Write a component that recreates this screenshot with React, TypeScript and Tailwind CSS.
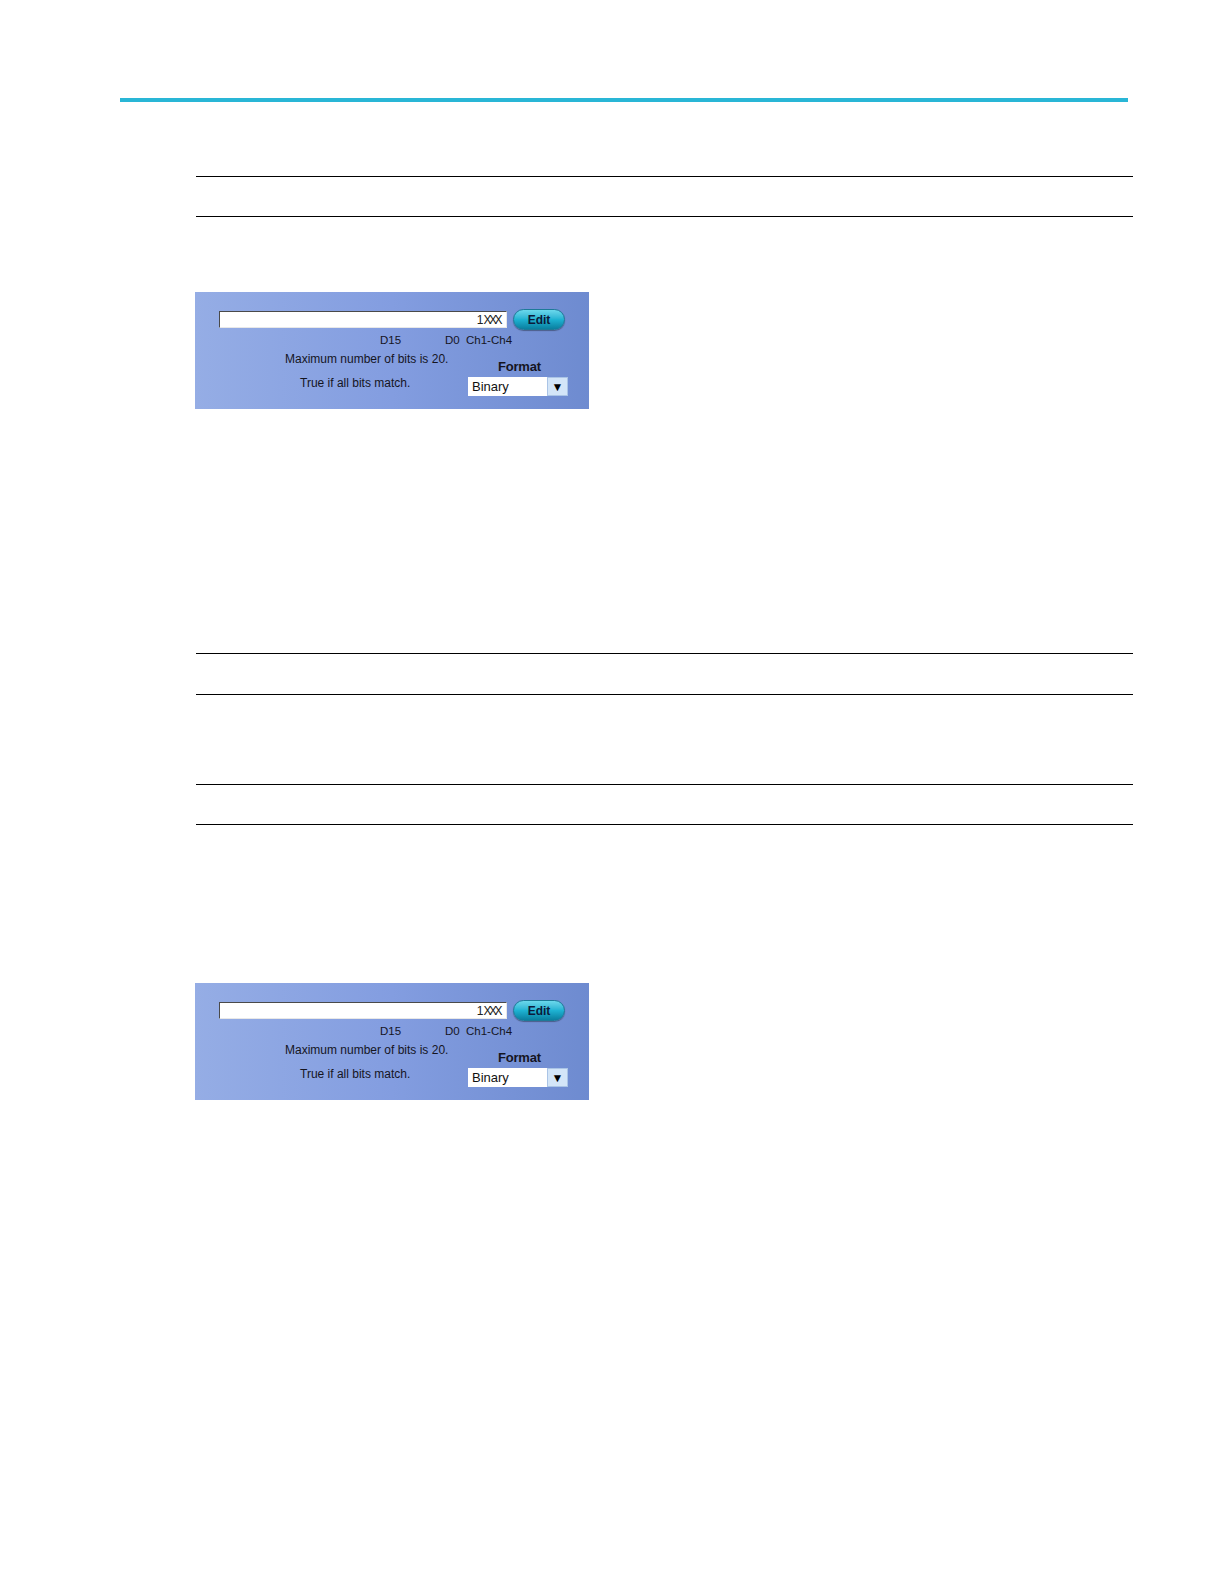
import React from "react"

const font = { fontFamily: '"Liberation Sans", Arial, sans-serif' }

function Rule() {
  return <div className="ml-[196px] h-px w-[937px] bg-black" />
}

function PatternPanel() {
  return (
    <div
      className="ml-[195px] flex h-[117px] w-[394px] flex-col bg-gradient-to-r from-[#95ade5] via-[#839de0] to-[#6e8bd0] text-[#15151f]"
      style={font}
    >
      {/* value field + edit button */}
      <div className="mt-[17px] flex h-[21px] items-center">
        <div className="ml-[24px] flex h-[17px] w-[288px] items-center justify-end border-l border-t border-l-[#4a4a4a] border-t-[#4a4a4a] border-r border-b border-r-[#e8e8e8] border-b-[#e8e8e8] bg-white pr-[4px] text-[12px] leading-none text-[#222]">
          <span>1</span>
          <span className="tracking-[-2.5px] pr-[2px]">XXX</span>
        </div>
        <button className="ml-[6px] flex h-[21px] w-[52px] items-center justify-center rounded-full border border-[#1d7a98] bg-gradient-to-b from-[#6ad8ec] via-[#1eb2d2] to-[#0a7f9f] pt-px text-[12px] font-bold leading-none text-[#0b1a3a] shadow-[0_1px_1px_rgba(0,0,0,0.35)]">
          Edit
        </button>
      </div>

      {/* bit labels */}
      <div className="mt-[3px] flex h-[14px] items-center text-[11.5px] leading-[14px]">
        <span className="ml-[185px] w-[65px]">D15</span>
        <span className="w-[21px]">D0</span>
        <span>Ch1-Ch4</span>
      </div>

      <div className="flex">
        <div className="w-[273px] text-[12px] leading-[14px]">
          <p className="mt-[5px] pl-[90px]">Maximum number of bits is 20.</p>
          <p className="mt-[10px] pl-[105px]">True if all bits match.</p>
        </div>
        <div className="flex flex-col">
          <span className="ml-[30px] mt-[12px] text-[13px] font-bold leading-[15px] tracking-[-0.2px]">Format</span>
          <div className="mt-[3px] flex h-[19px] w-[100px]">
            <div className="flex flex-1 items-center bg-white pl-[4px] text-[13px] leading-none text-[#111]">Binary</div>
            <div className="flex w-[21px] items-center justify-center border border-[#aac4e6] bg-[#d3e5f8] text-[12px] leading-none text-black">
              ▼
            </div>
          </div>
        </div>
      </div>
    </div>
  )
}

export default function App() {
  return (
    <div className="h-[1584px] w-[1224px] bg-white">
      <div className="pt-[98px]">
        <div className="ml-[120px] h-[4px] w-[1008px] bg-[#29b6d6]" />
      </div>

      <div className="mt-[74px]"><Rule /></div>
      <div className="mt-[39px]"><Rule /></div>

      <div className="mt-[75px]"><PatternPanel /></div>

      <div className="mt-[244px]"><Rule /></div>
      <div className="mt-[40px]"><Rule /></div>
      <div className="mt-[89px]"><Rule /></div>
      <div className="mt-[39px]"><Rule /></div>

      <div className="mt-[158px]"><PatternPanel /></div>
    </div>
  )
}
